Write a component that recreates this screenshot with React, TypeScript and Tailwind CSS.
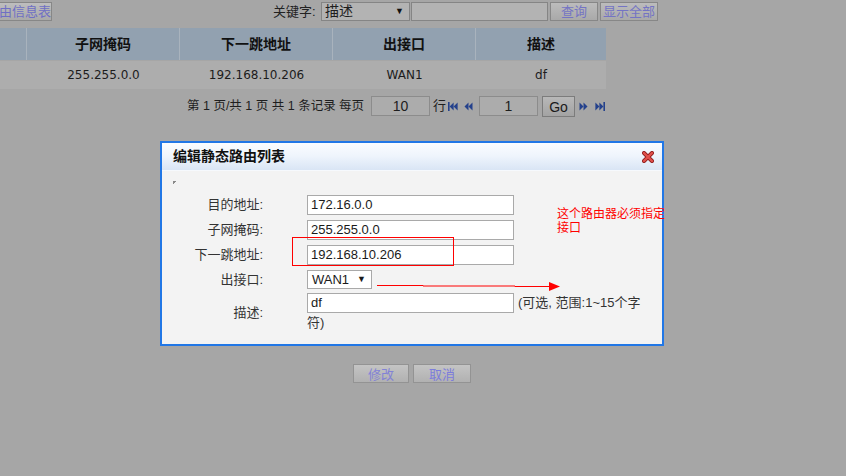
import React from 'react';

function FirstIcon() {
  return (
    <svg width="10" height="9" viewBox="0 0 10 9" className="block">
      <rect x="0" y="0" width="1.6" height="9" fill="#24418c" />
      <polygon points="1.6,4.5 5.6,0.5 5.6,8.5" fill="#24418c" />
      <polygon points="5.6,4.5 9.6,0.5 9.6,8.5" fill="#24418c" />
    </svg>
  );
}

function PrevIcon() {
  return (
    <svg width="9" height="9" viewBox="0 0 9 9" className="block">
      <polygon points="0.5,4.5 4.5,0.5 4.5,8.5" fill="#24418c" />
      <polygon points="4.5,4.5 8.5,0.5 8.5,8.5" fill="#24418c" />
    </svg>
  );
}

function NextIcon() {
  return (
    <svg width="9" height="9" viewBox="0 0 9 9" className="block">
      <polygon points="0.5,0.5 4.5,4.5 0.5,8.5" fill="#24418c" />
      <polygon points="4.5,0.5 8.5,4.5 4.5,8.5" fill="#24418c" />
    </svg>
  );
}

function LastIcon() {
  return (
    <svg width="10" height="9" viewBox="0 0 10 9" className="block">
      <polygon points="0.4,0.5 4.4,4.5 0.4,8.5" fill="#24418c" />
      <polygon points="4.4,0.5 8.4,4.5 4.4,8.5" fill="#24418c" />
      <rect x="8.4" y="0" width="1.6" height="9" fill="#24418c" />
    </svg>
  );
}

function CloseIcon() {
  return (
    <svg width="12" height="12" viewBox="0 0 12 12" className="block">
      <path d="M2 2 L10 10 M10 2 L2 10" stroke="#8f1d1d" strokeWidth="4" strokeLinecap="round" />
      <path d="M2 2 L10 10 M10 2 L2 10" stroke="#e2514c" strokeWidth="2.4" strokeLinecap="round" />
    </svg>
  );
}

const rows = [
  { label: '目的地址:', value: '172.16.0.0' },
  { label: '子网掩码:', value: '255.255.0.0' },
  { label: '下一跳地址:', value: '192.168.10.206' },
];

export default function App() {
  return (
    <div className="relative w-[846px] h-[476px] overflow-hidden bg-[#a6a6a6] text-[#1e1e1e] font-['Liberation_Sans','Noto_Sans_CJK_SC',sans-serif]">
      {/* top search bar */}
      <div className="flex items-start h-[28px] pt-[2px] text-[13px] leading-[17px]">
        <button className="-ml-[2px] w-[54px] h-[19px] border border-[#878787] bg-gradient-to-b from-[#bebebe] to-[#a9a9a9] text-[#6f6fc4] text-left pl-0">
          由信息表
        </button>
        <div className="ml-[221px] w-[48px] h-[19px] leading-[19px] text-[#222]">关键字:</div>
        <div className="w-[89px] h-[19px] border border-[#858585] bg-[#b3b3b3] flex items-center justify-between pl-[3px] pr-[5px] text-[14px]">
          <span>描述</span>
          <span className="text-[9px] text-[#111]">▼</span>
        </div>
        <div className="ml-[1px] w-[137px] h-[19px] border border-[#858585] bg-[#b3b3b3]" />
        <button className="ml-[2px] w-[48px] h-[19px] border border-[#878787] bg-gradient-to-b from-[#bcbcbc] to-[#a9a9a9] text-[#7474c4]">
          查询
        </button>
        <button className="ml-[2px] w-[58px] h-[19px] border border-[#878787] bg-gradient-to-b from-[#bcbcbc] to-[#a9a9a9] text-[#7474c4]">
          显示全部
        </button>
      </div>

      {/* table */}
      <div className="grid grid-cols-[27px_153px_153px_143px_130px] w-[606px]">
        {['', '子网掩码', '下一跳地址', '出接口', '描述'].map((h, i) => (
          <div
            key={i}
            className={`h-[32px] bg-[#92a1b0] flex items-center justify-center text-[14px] font-bold text-[#111] ${i < 4 ? 'border-r border-[#a9b3bd]' : ''}`}
          >
            {h}
          </div>
        ))}
        {['', '255.255.0.0', '192.168.10.206', 'WAN1', 'df'].map((d, i) => (
          <div
            key={i}
            className="h-[28px] mt-[1px] bg-[#adadad] flex items-center justify-center text-[12px] text-[#1c1c1c] font-['DejaVu_Sans','Noto_Sans_CJK_SC',sans-serif]"
          >
            {d}
          </div>
        ))}
      </div>

      {/* pagination */}
      <div className="flex items-center h-[20px] mt-[7px] pl-[187px] text-[13px] text-[#1e1e1e]">
        <span className="w-[184px] whitespace-nowrap text-[12.5px]">第 1 页/共 1 页 共 1 条记录 每页</span>
        <div className="w-[59px] h-[20px] border border-[#8c8c8c] bg-[#acacac] text-center leading-[18px] text-[14px]">10</div>
        <span className="ml-[3px]">行</span>
        <span className="ml-[2px]"><FirstIcon /></span>
        <span className="ml-[6px]"><PrevIcon /></span>
        <div className="ml-[6px] w-[59px] h-[20px] border border-[#8c8c8c] bg-[#acacac] text-center leading-[18px] text-[14px]">1</div>
        <button className="ml-[4px] w-[33px] h-[21px] border border-[#7c7c7c] bg-gradient-to-b from-[#b8b8b8] to-[#a3a3a3] text-[14px] text-[#1a1a1a]">
          Go
        </button>
        <span className="ml-[4px]"><NextIcon /></span>
        <span className="ml-[7px]"><LastIcon /></span>
      </div>

      {/* page buttons */}
      <div className="flex gap-[4px] mt-[248px] pl-[353px] text-[13px]">
        <button className="w-[56px] h-[19px] border border-[#939393] bg-gradient-to-b from-[#c4c4c4] to-[#b1b1b1] text-[#8282d6]">修改</button>
        <button className="w-[58px] h-[19px] border border-[#939393] bg-gradient-to-b from-[#c4c4c4] to-[#b1b1b1] text-[#7c7cdc]">取消</button>
      </div>

      {/* dialog */}
      <div className="absolute left-[160px] top-[141px] w-[504px] h-[205px] border-2 border-[#2177e6] bg-[#f3f3f3] flex flex-col">
        <div className="h-[28px] flex items-center justify-between pl-[11px] pr-[8px] bg-gradient-to-b from-[#fbfdff] via-[#eef4fc] to-[#d9e5f5] border-b border-[#f6f9fd]">
          <span className="text-[14px] font-bold text-[#111]">编辑静态路由列表</span>
          <CloseIcon />
        </div>
        <div className="pt-[10px]">
          <div className="ml-[11px] w-[4px] h-[4px] bg-[linear-gradient(135deg,#8a8a8a_50%,transparent_50%)]" />
          <div className="mt-[10px] flex flex-col gap-[5px] text-[13px]">
            {rows.map((r) => (
              <div key={r.label} className="flex items-center h-[20px]">
                <div className="w-[101px] text-right text-[#333]">{r.label}</div>
                <div className="ml-[44px] w-[207px] h-[20px] border border-[#a9a9a9] bg-white pl-[3px] leading-[18px] text-[#1a1a1a]">
                  {r.value}
                </div>
              </div>
            ))}
            <div className="flex items-center h-[19px]">
              <div className="w-[101px] text-right text-[#333]">出接口:</div>
              <div className="ml-[44px] w-[65px] h-[19px] border border-[#a9a9a9] bg-white flex items-center justify-between pl-[4px] pr-[5px] text-[#1a1a1a]">
                <span>WAN1</span>
                <span className="text-[9px]">▼</span>
              </div>
            </div>
            <div className="flex items-center -mt-[1px]">
              <div className="w-[101px] text-right text-[#333]">描述:</div>
              <div className="ml-[44px] text-[#333] leading-[18px]">
                <div className="flex items-center">
                  <div className="w-[207px] h-[20px] border border-[#a9a9a9] bg-white pl-[3px] leading-[18px] text-[#1a1a1a]">df</div>
                  <span className="ml-[4px]">(可选, 范围:1~15个字</span>
                </div>
                <div className="mt-[1px]">符)</div>
              </div>
            </div>
          </div>
        </div>
      </div>

      {/* red annotations */}
      <div className="absolute left-[292px] top-[237px] w-[162px] h-[29px] border border-[#ff0000]" />
      <div className="absolute left-[557px] top-[206px] text-[12px] leading-[14px] text-[#ff0000] font-['Noto_Sans_CJK_SC',sans-serif]">
        <div>这个路由器必须指定</div>
        <div>接口</div>
      </div>
      <svg className="absolute left-[376px] top-[278px]" width="186" height="16" viewBox="0 0 186 16">
        <polyline points="1,7.5 47,7.5 47,8 139,8 139,8.5 174,8.5" fill="none" stroke="#ff0000" strokeWidth="1" />
        <polygon points="173,4 184,8.5 173,13" fill="#ff0000" />
      </svg>
    </div>
  );
}
